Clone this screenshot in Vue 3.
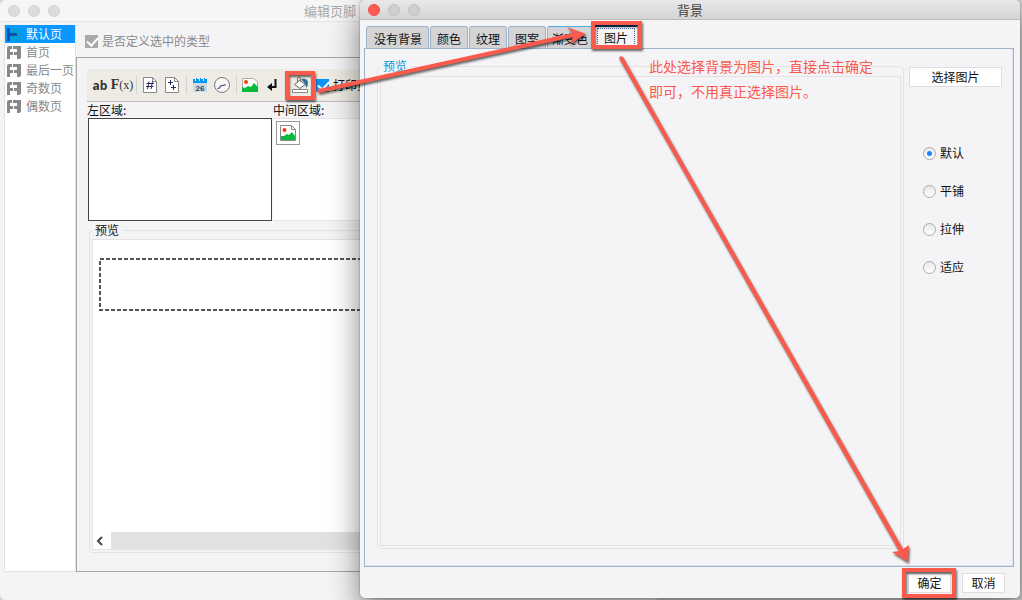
<script setup>
import { ref } from 'vue'

const pages = ['默认页', '首页', '最后一页', '奇数页', '偶数页']
const page = ref(0)
const custom = ref(true)
const print = ref(true)
const tabs = ['没有背景', '颜色', '纹理', '图案', '渐变色', '图片']
const tab = ref(5)
const modes = ['默认', '平铺', '拉伸', '适应']
const mode = ref('默认')
</script>

<template>
  <div class="desktop">
    <section class="window editor">
      <header class="titlebar">
        <div class="lights"><i></i><i></i><i></i></div>
        <h1>编辑页脚</h1>
      </header>
      <div class="editor-body">
        <nav class="pages">
          <button v-for="(p, i) in pages" :key="p" :class="{ selected: i === page }" @click="page = i">
            <svg width="15" height="15" viewBox="0 0 15 15">
              <template v-if="i === page">
                <path d="M6 1h9v13H6z" fill="#009edb" />
                <path d="M1 1h3v5h7v3H4v5H1z" fill="#0756a8" />
              </template>
              <path v-else d="M1 3Q1 1 3 1h3v3H4v3h3v3H4v4H1zM7 1h8v11q0 2-2 2h-2V4H7zM8 7h3v3H8z" fill="#888" />
            </svg>
            <span>{{ p }}</span>
          </button>
        </nav>
        <main class="editor-main">
          <label class="custom"><input v-model="custom" type="checkbox" class="check grey"><span>是否定义选中的类型</span></label>
          <div class="panel">
            <div class="toolbar">
              <button class="ab">ab</button>
              <button class="fx">F<small>(x)</small></button>
              <i class="sep"></i>
              <button aria-label="页码">
                <svg width="14" height="16" viewBox="0 0 14 16" fill="none">
                  <path d="M.5.5h9l4 4v11H.5z" fill="#fff" stroke="#888" /><path d="M9.500.5v4h4" stroke="#888" />
                  <path d="M6 4.500 4.500 12M9.500 4.500 8 12M3.500 6.500h7.500M3 9.500h7.500" stroke="#29285c" />
                </svg>
              </button>
              <button aria-label="总页数">
                <svg width="14" height="16" viewBox="0 0 14 16" fill="none">
                  <path d="M.5.5h9l4 4v11H.5z" fill="#fff" stroke="#888" /><path d="M9.500.5v4h4" stroke="#888" />
                  <path d="M5.500 3v5M3 5.500h5M8.500 8v5M6 10.500h5" stroke="#29285c" />
                </svg>
              </button>
              <i class="sep"></i>
              <button class="calendar" aria-label="日期">
                <svg width="14" height="16" viewBox="0 0 14 16">
                  <path d="M0 6h14v9H0z" fill="#cdd8dc" />
                  <path d="M0 2h14v4H0z" fill="#0797f2" />
                  <path d="M2 1h1v3H2zM6 1h1v3H6zM10 1h1v3h-1z" fill="#edebe3" />
                  <path d="M3 1h1v2H3zM7 1h1v2H7zM11 1h1v2h-1z" fill="#0797f2" />
                </svg>
                <b>26</b>
              </button>
              <button aria-label="时间">
                <svg width="18" height="18" viewBox="0 0 18 18"><circle cx="9" cy="9" r="7.500" fill="#f7f7f7" stroke="#777" /><path d="M4 11.500 6 11.500 8 9.500H13" fill="none" stroke="#39386c" transform="rotate(-12 9 10)" /></svg>
              </button>
              <i class="sep"></i>
              <button aria-label="图片">
                <svg width="16" height="14" viewBox="0 0 16 14"><path d="M.5.5h11l4 3v10H.5z" fill="#fff" stroke="#aaa" /><circle cx="4" cy="4" r="2" fill="#f53c08" /><path d="M0 14V9l3 1 3-2 3 1 3-4 4 4v5z" fill="#06bb3b" /></svg>
              </button>
              <button aria-label="换行">
                <svg width="12" height="14" viewBox="0 0 12 14"><path d="M9.500 1v8H4" fill="none" stroke="#111" stroke-width="2" /><path d="M1 9l5-4v8z" fill="#111" /></svg>
              </button>
              <i class="sep blank"></i>
              <button aria-label="背景">
                <svg width="18" height="18" viewBox="0 0 18 18" fill="none">
                  <path d="M1.500 13.500h15v3h-15z" fill="#fff" stroke="#888" />
                  <path d="M10 3q7-1 7 4 0 3-2 5 0-4-5-9z" fill="#326e98" />
                  <path d="M3.500 8.500 9 4l5 4.500-5 4z" fill="#fff" stroke="#666" />
                  <path d="M6.500 7V3q0-2 1.500-2t1.500 2v3" stroke="#777" />
                </svg>
              </button>
              <label class="print"><input v-model="print" type="checkbox" class="check"><span>打印页脚</span></label>
            </div>
            <div class="areas">
              <div class="area left"><label for="left-area">左区域:</label><textarea id="left-area"></textarea></div>
              <div class="area middle">
                <span>中间区域:</span>
                <div class="middle-box">
                  <button aria-label="图片">
                    <svg width="16" height="16" viewBox="0 0 16 16"><path d="M.5.500h11l4 4v11H.5z" fill="#fff" stroke="#888" /><path d="M11.500.5v4h4" fill="none" stroke="#888" /><circle cx="4.500" cy="5" r="2" fill="#f53c08" /><path d="M1 15v-4l3 0 3-2 2 1 3-3 3 4v4z" fill="#06bb3b" /></svg>
                  </button>
                </div>
              </div>
            </div>
            <fieldset class="group preview">
              <legend>预览</legend>
              <div class="sheet">
                <svg class="footer-frame"><rect x="1" y="1" width="600" height="51" fill="none" stroke="#555" stroke-width="2" stroke-dasharray="4 2" /></svg>
                <div class="scroll">
                  <button aria-label="向左滚动"><svg width="8" height="10" viewBox="0 0 8 10"><path d="M6 1 2 5l4 4" fill="none" stroke="#444" stroke-width="2" /></svg></button>
                </div>
              </div>
            </fieldset>
          </div>
        </main>
      </div>
    </section>

    <section class="window dialog">
      <header class="titlebar">
        <div class="lights"><i class="red"></i><i></i><i></i></div>
        <h2>背景</h2>
      </header>
      <div class="dialog-body">
        <div class="tabs" role="tablist">
          <button v-for="(t, i) in tabs" :key="t" role="tab" :aria-selected="i === tab" :class="{ active: i === tab, hover: i === 4 }" @click="tab = i"><span>{{ t }}</span></button>
        </div>
        <div class="tab-panel">
          <fieldset class="group picture">
            <legend>预览</legend>
            <div class="canvas"></div>
          </fieldset>
          <div class="options">
            <button class="plain">选择图片</button>
            <div class="modes">
              <label v-for="m in modes" :key="m"><input v-model="mode" type="radio" name="mode" :value="m"><span>{{ m }}</span></label>
            </div>
          </div>
        </div>
        <footer>
          <button class="plain">确定</button>
          <button class="plain">取消</button>
        </footer>
      </div>
    </section>

    <svg class="marks" width="1022" height="600" viewBox="0 0 1022 600">
      <g fill="none" stroke="#fa5a4b" stroke-width="4">
        <path d="M287 73h26v25h-26z" />
        <path d="M593 23h47v24h-47z" />
        <path d="M904 570h50v26h-50z" />
      </g>
      <g fill="#fa5a4b">
        <path d="M318 89 573 33 567 27 586 34 570 44 573 37 319 93q-3-2-1-4z" />
        <path d="M619 58q1-3 4-1L903 549l6-4-1 17-16-10 7-1z" />
      </g>
    </svg>
    <p class="note">此处选择背景为图片，直接点击确定<br>即可，不用真正选择图片。</p>
  </div>
</template>

<style>
body { margin: 0; background: #d8d8d8; }
</style>

<style scoped>
* { box-sizing: border-box; }
.desktop { position: relative; height: 100vh; min-height: 600px; overflow: hidden; font: 12px/18px "Noto Sans CJK SC", sans-serif; color: #111; }
button { margin: 0; padding: 0; border: 0; background: none; font: inherit; color: inherit; }
svg { display: block; flex: none; }
.window { position: absolute; display: flex; flex-direction: column; background: #f4f4f7; overflow: hidden; }
.editor { left: 0; top: 0; bottom: 0; width: 660px; border-radius: 6px; }
.dialog { left: 360px; right: 2px; top: 0; bottom: 2px; border-radius: 5px; box-shadow: 0 0 2px #777, 0 12px 30px rgba(0, 0, 0, .5); }
.titlebar { display: grid; grid-template-columns: 1fr auto 1fr; align-items: center; height: 22px; flex: none; border-bottom: 1px solid #e5e5e6; background: #f6f6f6; }
.titlebar h1, .titlebar h2 { margin: 0; font-size: 13px; line-height: 20px; font-weight: 400; color: #aaa; }
.lights { display: flex; gap: 8px; padding-left: 8px; }
.lights i { width: 12px; height: 12px; border-radius: 50%; background: #dcdcdc; border: 1px solid #d2d2d2; }
.dialog .titlebar { height: 20px; background: linear-gradient(#e9e9e9, #d4d4d4); border-color: #bcbcbc; }
.dialog .titlebar h2 { color: #444; line-height: 18px; }
.dialog .lights i { background: #cfcfcf; border-color: #bfbfbf; }
.dialog .lights .red { background: #ff5b52; border-color: #f04b43; }

.editor-body { flex: 1; min-height: 0; display: flex; padding: 3px 8px 28px 4px; }
.pages { width: 72px; flex: none; background: #fff; border: 1px solid #e2e2e2; border-top: 0; }
.pages button { display: flex; align-items: center; gap: 5px; width: 100%; height: 18px; padding-left: 1px; color: #8a8a8a; white-space: nowrap; text-align: left; }
.pages .selected { background: #0a97ff; color: #fff; }
.editor-main { flex: 1; min-width: 0; display: flex; flex-direction: column; }
.custom { display: flex; align-items: center; gap: 4px; height: 32px; padding-left: 9px; color: #8a8a8a; flex: none; }
.check { appearance: none; width: 13px; height: 13px; margin: 0; background: #0a92f5; flex: none; }
.check.grey { background: #aaa; }
.check:checked::before { content: ""; display: block; width: 9px; height: 5px; margin: 2px 0 0 2px; border: solid #fff; border-width: 0 0 2px 2px; transform: rotate(-48deg); }
.panel { flex: 1; min-height: 0; display: flex; flex-direction: column; border: 1px solid #a5a59b; padding: 11px 10px 18px; }
.toolbar { display: flex; align-items: center; height: 33px; flex: none; padding-left: 2px; background: #edebe3; border-bottom: 1px solid #bcbcb8; }
.toolbar button { width: 22px; height: 22px; display: flex; align-items: center; justify-content: center; position: relative; }
.toolbar .ab { font: bold 12px "Open Sans", sans-serif; color: #333; }
.toolbar .fx { font: bold 14px "Liberation Serif", serif; color: #333; }
.fx small { font: 12px "Liberation Serif", serif; }
.calendar b { position: absolute; left: 0; right: 0; top: 10px; font: bold 8px/9px "Liberation Sans", sans-serif; color: #075172; }
.sep { width: 6px; height: 18px; display: flex; justify-content: center; }
.sep::before { content: ""; width: 1px; background: #d3d2cc; }
.sep.blank::before { display: none; }
.print { display: flex; align-items: center; gap: 4px; padding-left: 5px; }
.areas { display: flex; gap: 1px; height: 119px; flex: none; }
.area { display: flex; flex-direction: column; line-height: 16px; }
.area.left { width: 185px; }
.area.middle { flex: 1; }
textarea { flex: 1; width: 184px; margin: 0 0 0 1px; border: 1px solid #444; background: #fff; resize: none; }
.middle-box { flex: 1; padding: 2px 3px; border: solid #e5e5e6; border-width: 1px 0; background: #fff; }
.middle-box button { width: 24px; height: 24px; border: 1px solid #999; display: flex; align-items: center; justify-content: center; }
.group { min-width: 0; min-height: 0; margin: 0; border: 1px solid #e3e3e6; border-radius: 4px; display: flex; flex: 1; }
.group legend { height: 18px; padding: 0 3px; line-height: 18px; }
.preview { margin-left: 2px; padding: 0 2px 2px; }
.sheet { flex: 1; min-width: 0; display: flex; flex-direction: column; justify-content: space-between; background: #fff; border: 1px solid #e3e3e6; }
.footer-frame { width: 500px; height: 53px; margin: 18px 6px 0; }
.scroll { height: 17px; background: #e1e1e1; }
.scroll button { display: flex; align-items: center; justify-content: center; width: 18px; height: 17px; background: #fff; padding-right: 4px; }

.dialog-body { flex: 1; min-height: 0; display: flex; flex-direction: column; padding: 6px 6px 5px 4px; }
.tabs { display: flex; align-items: flex-end; gap: 1px; height: 22px; padding-left: 2px; flex: none; }
.tabs button { height: 22px; padding: 0 6px 0 7px; border: 1px solid #9eb2c9; border-bottom: 0; border-radius: 3px 3px 0 0; background: #d4d4d7; line-height: 24px; white-space: nowrap; }
.tabs button:nth-child(n+2) { padding: 0 6px; }
.tabs .hover:nth-child(n+2) { border-top-color: #4fa9e3; padding: 0 4px; }
.tabs .active:nth-child(n+2) { height: 24px; border-top: 3px solid #004c80; background: #f4f4f7; padding: 0 2px; }
.tabs .active span { display: block; height: 20px; padding: 0 6px; border: 1px dotted #526aa0; line-height: 18px; }
.tab-panel { flex: 1; min-height: 0; display: flex; gap: 5px; padding: 8px 11px 17px 12px; border: 1px solid #9eb2c9; box-shadow: inset -1px -1px 0 #dce3ea; }
.picture { padding: 1px 2px 2px; }
.picture legend { color: #0799dc; padding: 0 3px; }
.canvas { flex: 1; border: 1px solid #e3e3e6; }
.options { width: 93px; flex: none; padding-top: 10px; }
.plain { height: 20px; border: 1px solid #dedee0; background: #fff; line-height: 18px; }
.options .plain { width: 100%; }
.modes { display: flex; flex-direction: column; gap: 20px; padding: 57px 0 0 14px; }
.modes label { display: flex; align-items: center; gap: 4px; }
.modes input { appearance: none; width: 13px; height: 13px; margin: 0; border: 1px solid #aaa; border-radius: 50%; background: linear-gradient(#e8e8e8, #fff); display: grid; place-items: center; }
.modes input:checked::before { content: ""; width: 5px; height: 5px; border-radius: 50%; background: #1686fa; }
footer { flex: none; display: flex; justify-content: flex-end; gap: 11px; padding: 6px 9px 0 0; }
footer .plain { width: 43px; }
.marks { position: absolute; left: 0; top: 0; pointer-events: none; filter: drop-shadow(1px 2px 1px rgba(0, 0, 0, .6)); }
.note { position: absolute; left: 649px; top: 54px; margin: 0; font-size: 14px; line-height: 25px; color: #fa5a4b; white-space: nowrap; pointer-events: none; }
</style>
